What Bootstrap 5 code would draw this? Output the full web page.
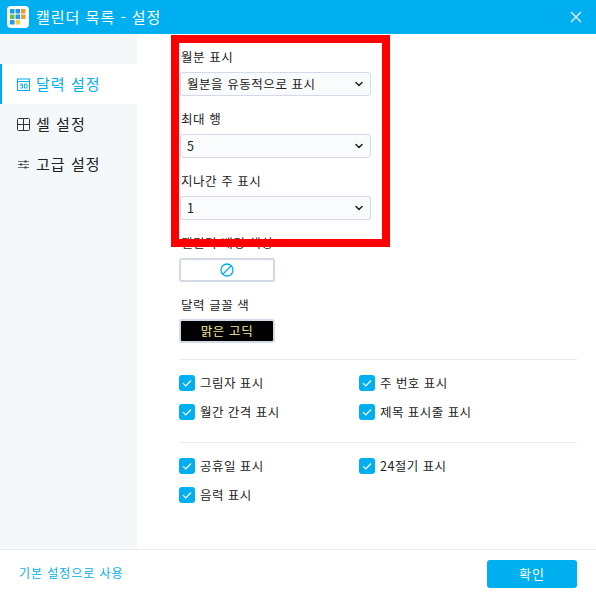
<!DOCTYPE html>
<html lang="ko">
<head>
<meta charset="utf-8">
<title>캘린더 목록 - 설정</title>
<link rel="stylesheet" href="https://cdn.jsdelivr.net/npm/bootstrap@5.3.0/dist/css/bootstrap.min.css">
<style>
html,body{height:100%;overflow:hidden}
body{font-family:"Noto Sans CJK KR","Noto Sans",sans-serif;font-size:12px;color:#222;background:#fff;width:596px;height:595px}
.shell{height:595px;position:relative}
.titlebar{height:34px;background:#00aff0;color:#fff;font-size:15px;letter-spacing:1px;padding:0 14px 0 7px}
.applogo{width:22px;height:22px;background:#fff;border-radius:4px;margin-right:7px}
.mainrow{height:515px}
.sidenav{width:137px;background:#f4f8fb;padding-top:30px}
.sideitem{height:40px;padding-left:15px;font-size:15px;letter-spacing:1.05px;color:#222;gap:6px;border-left:2px solid transparent;margin:0}
.sideitem.current{background:#fff;color:#00aff0;border-left-color:#00aff0}
.panel{padding:0 19px 0 42px;min-width:0}
.fieldlabel{font-size:12.5px;line-height:18px;margin:0 0 0 2px;letter-spacing:.55px;height:18px}
.lab1{margin-top:14px}
.fieldsel{width:191px;height:24px;padding:0 20px 0 6px;margin-left:1px;font-size:12.5px;line-height:22px;letter-spacing:.55px;background-color:#fafbfd;border:1px solid #d4d9e6;border-radius:3px;color:#222;background-image:url("data:image/svg+xml,%3csvg xmlns='http://www.w3.org/2000/svg' viewBox='0 0 16 16'%3e%3cpath fill='none' stroke='%23222' stroke-linecap='round' stroke-linejoin='round' stroke-width='3' d='m2 5 6 6 6-6'/%3e%3c/svg%3e");background-position:right 7px center;background-size:8px 8px;margin-top:6px;margin-bottom:14px}
.swatch{width:96px;height:24px;border:2px solid #d4d9e6;border-radius:3px;background:#fff;padding:0;margin-top:6px}
.swatch.fontswatch{background:#000;color:#f5ec9c;font-size:12.5px;letter-spacing:.6px;line-height:20px;margin-top:5px}
.swatchgap{margin-top:14px}
.rule{height:1px;background:#ebebf3;border:0;opacity:1;margin:0}
.rule1{margin-top:16px}
.rule2{margin-top:22px}
.checks{display:grid;grid-template-columns:180px 1fr;row-gap:13px;padding:15px 0 0 0}
.chk{gap:5px;font-size:12.5px;letter-spacing:.45px;height:16px;margin:0}
.chkbox{width:16px;height:16px;background:#00aff0;border-radius:3px;flex:none}
.footerbar{height:46px;border-top:1px solid #ebebf3;padding:0 19px}
.resetlink{color:#00aff0;font-size:12px;letter-spacing:.95px;text-decoration:none}
.okbtn{width:90px;height:28px;background:#00aff0;border:0;border-radius:3px;color:#fff;font-size:13px;letter-spacing:1px;padding:0;--bs-btn-hover-bg:#00aff0;margin-top:3px}
.redmark{position:absolute;left:171px;top:35px;width:219px;height:212px;border:8px solid #f00;pointer-events:none;background:transparent}
</style>
</head>
<body>
<div class="shell d-flex flex-column">
  <div class="titlebar d-flex align-items-center flex-shrink-0">
    <span class="applogo d-flex align-items-center justify-content-center">
      <svg width="16" height="16" viewBox="0 0 16 16"><rect x="0" y="0" width="4.5" height="4.5" fill="#1f9be6"/><rect x="5.5" y="0" width="4.5" height="4.5" fill="#1f9be6"/><rect x="11" y="0" width="4.5" height="4.5" fill="#f19a38"/><rect x="0" y="5.5" width="4.5" height="4.5" fill="#6fbd45"/><rect x="5.5" y="5.5" width="4.5" height="4.5" fill="#1f9be6"/><rect x="11" y="5.5" width="4.5" height="4.5" fill="#f19a38"/><rect x="0" y="11" width="4.5" height="4.5" fill="#1f9be6"/><rect x="5.5" y="11" width="4.5" height="4.5" fill="#f5cf3b"/></svg>
    </span>
    <span>캘린더 목록 - 설정</span>
    <svg class="ms-auto" width="12" height="12" viewBox="0 0 12 12"><path d="M1 1L11 11M11 1L1 11" stroke="#fff" stroke-width="1.1" fill="none"/></svg>
  </div>
  <div class="mainrow d-flex flex-shrink-0">
    <nav class="sidenav flex-shrink-0">
      <div class="sideitem current d-flex align-items-center">
        <svg width="13" height="13" viewBox="0 0 13 13"><rect x=".5" y="1" width="12" height="11.5" fill="none" stroke="#00aff0"/><path d="M.5 3.5H12.500" stroke="#00aff0"/><path d="M3 6H5.500V7.500H3.500M5.500 7.500V10H3M7.500 6H10V10H7.500Z" fill="none" stroke="#00aff0" stroke-width=".9"/></svg>
        <span>달력 설정</span>
      </div>
      <div class="sideitem d-flex align-items-center">
        <svg width="13" height="13" viewBox="0 0 13 13"><rect x=".5" y=".5" width="12" height="12" rx="1" fill="none" stroke="#333"/><path d="M6.500 .5V12.500M.5 6.500H12.500" stroke="#333"/></svg>
        <span>셀 설정</span>
      </div>
      <div class="sideitem d-flex align-items-center">
        <svg width="13" height="13" viewBox="0 0 13 13"><path d="M1 3.500H12M1 6.500H12M1 9.500H12" stroke="#777"/><rect x="7.500" y="2.500" width="2" height="2" fill="#333"/><rect x="3" y="5.500" width="2" height="2" fill="#333"/><rect x="7.500" y="8.500" width="2" height="2" fill="#333"/></svg>
        <span>고급 설정</span>
      </div>
    </nav>
    <main class="panel flex-grow-1">
      <p class="fieldlabel lab1">월분 표시</p>
      <select class="form-select fieldsel" aria-label="월분 표시"><option>월분을 유동적으로 표시</option></select>
      <p class="fieldlabel">최대 행</p>
      <select class="form-select fieldsel" aria-label="최대 행"><option>5</option></select>
      <p class="fieldlabel">지나간 주 표시</p>
      <select class="form-select fieldsel" aria-label="지나간 주 표시"><option>1</option></select>
      <p class="fieldlabel">캘린더 배경 색상</p>
      <button class="swatch d-flex align-items-center justify-content-center" type="button" aria-label="없음">
        <svg width="14" height="14" viewBox="0 0 14 14"><circle cx="7" cy="7" r="6" fill="none" stroke="#00aff0" stroke-width="1.300"/><path d="M3 11L11 3" stroke="#00aff0" stroke-width="1.300"/></svg>
      </button>
      <p class="fieldlabel swatchgap">달력 글꼴 색</p>
      <button class="swatch fontswatch d-block" type="button">맑은 고딕</button>
      <hr class="rule rule1">
      <div class="checks">
        <label class="chk d-flex align-items-center"><span class="chkbox d-flex align-items-center justify-content-center"><svg width="12" height="12" viewBox="0 0 12 12"><path d="M2 6.200L4.800 9L10 3.500" fill="none" stroke="#fff" stroke-width="1.200"/></svg></span>그림자 표시</label>
        <label class="chk d-flex align-items-center"><span class="chkbox d-flex align-items-center justify-content-center"><svg width="12" height="12" viewBox="0 0 12 12"><path d="M2 6.200L4.800 9L10 3.500" fill="none" stroke="#fff" stroke-width="1.200"/></svg></span>주 번호 표시</label>
        <label class="chk d-flex align-items-center"><span class="chkbox d-flex align-items-center justify-content-center"><svg width="12" height="12" viewBox="0 0 12 12"><path d="M2 6.200L4.800 9L10 3.500" fill="none" stroke="#fff" stroke-width="1.200"/></svg></span>월간 간격 표시</label>
        <label class="chk d-flex align-items-center"><span class="chkbox d-flex align-items-center justify-content-center"><svg width="12" height="12" viewBox="0 0 12 12"><path d="M2 6.200L4.800 9L10 3.500" fill="none" stroke="#fff" stroke-width="1.200"/></svg></span>제목 표시줄 표시</label>
      </div>
      <hr class="rule rule2">
      <div class="checks">
        <label class="chk d-flex align-items-center"><span class="chkbox d-flex align-items-center justify-content-center"><svg width="12" height="12" viewBox="0 0 12 12"><path d="M2 6.200L4.800 9L10 3.500" fill="none" stroke="#fff" stroke-width="1.200"/></svg></span>공휴일 표시</label>
        <label class="chk d-flex align-items-center"><span class="chkbox d-flex align-items-center justify-content-center"><svg width="12" height="12" viewBox="0 0 12 12"><path d="M2 6.200L4.800 9L10 3.500" fill="none" stroke="#fff" stroke-width="1.200"/></svg></span>24절기 표시</label>
        <label class="chk d-flex align-items-center"><span class="chkbox d-flex align-items-center justify-content-center"><svg width="12" height="12" viewBox="0 0 12 12"><path d="M2 6.200L4.800 9L10 3.500" fill="none" stroke="#fff" stroke-width="1.200"/></svg></span>음력 표시</label>
      </div>
    </main>
  </div>
  <footer class="footerbar d-flex align-items-center justify-content-between flex-shrink-0">
    <a class="resetlink" href="#">기본 설정으로 사용</a>
    <button class="btn okbtn" type="button">확인</button>
  </footer>
  <div class="redmark"></div>
</div>
<script src="https://cdn.jsdelivr.net/npm/bootstrap@5.3.0/dist/js/bootstrap.bundle.min.js"></script>
</body>
</html>
